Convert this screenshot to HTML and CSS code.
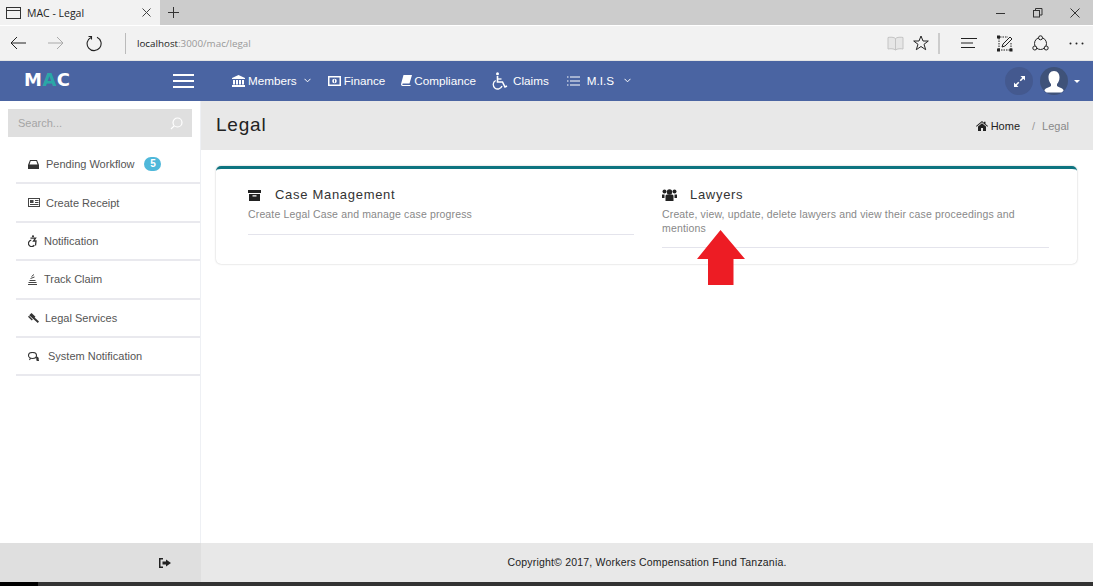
FILE: index.html
```html
<!DOCTYPE html>
<html lang="en">
<head>
    <meta charset="UTF-8">
    <title>MAC - Legal</title>
    <link rel="stylesheet" href="styles.css">
</head>
<body>

<div class="tabstrip">
    <div class="tab">
        <svg class="tab-icon" width="16" height="14" viewBox="0 0 16 14" fill="none" stroke="#333"><rect x="0.5" y="1.5" width="14" height="11"/><path d="M1 4.5h13"/></svg>
        <span class="tab-title">MAC - Legal</span>
        <svg width="9" height="9" viewBox="0 0 9 9" stroke="#444" fill="none"><path d="M0.500 0.500l8 8M8.500 0.500l-8 8"/></svg>
    </div>
    <svg class="new-tab" width="11" height="11" viewBox="0 0 11 11" stroke="#333" fill="none"><path d="M5.500 0v11M0 5.500h11"/></svg>
    <div class="win-buttons">
        <svg width="10" height="10" viewBox="0 0 10 10" stroke="#333" fill="none"><path d="M0 5.500h9"/></svg>
        <svg width="10" height="10" viewBox="0 0 10 10" stroke="#333" fill="none"><rect x="0.5" y="2.5" width="6" height="6.5"/><path d="M2.5 2.5v-2h6.5v6.500h-2"/></svg>
        <svg width="10" height="10" viewBox="0 0 10 10" stroke="#333" fill="none"><path d="M0.500 0.500l9 9M9.500 0.500l-9 9"/></svg>
    </div>
</div>

<div class="toolbar">
    <svg class="tool-back" width="17" height="14" viewBox="0 0 17 14" stroke="#222" fill="none"><path d="M16 7H1M7 1L1 7l6 6"/></svg>
    <svg class="tool-forward" width="17" height="14" viewBox="0 0 17 14" stroke="#aaa" fill="none"><path d="M0 7h15M9 1l6 6-6 6"/></svg>
    <svg class="tool-reload" width="17" height="17" viewBox="0 0 17 17" stroke="#222" fill="none" stroke-width="1.100"><path d="M5 2.400A7 7 0 1 0 11 2.300"/><path d="M2.500 1.500H5.500V4.500"/></svg>
    <div class="address"><b>localhost</b>:3000/mac/legal</div>
    <svg class="tool-book" width="17" height="15" viewBox="0 0 17 15" stroke="#c4c4c4" fill="#e6e6e6"><path d="M8.500 2.500C7 1 3 1 1 1.500V13c2-.5 6-.5 7.500 1 1.500-1.500 5.500-1.500 7.500-1V1.500C14 1 10 1 8.500 2.500zM8.500 2.500V14"/></svg>
    <svg class="tool-star" width="16" height="16" viewBox="0 0 16 16" stroke="#222" fill="none"><path d="M8 1l2 5h5.300l-4.300 3.300 1.700 5.400L8 11.500l-4.700 3.200L5 9.300.700 6H6z"/></svg>
    <div class="tool-sep"></div>
    <svg class="tool-hub" width="17" height="12" viewBox="0 0 17 12" stroke="#222" fill="none"><path d="M0 1.500h16M0 6h12M0 10.500h14"/></svg>
    <svg class="tool-note" width="16" height="17" viewBox="0 0 16 17" stroke="#222" fill="none"><path d="M3 2h8M14 8v6M2 3v11M4 15h9" stroke-dasharray="1.500 1"/><path d="M5 12l1-3 7-7 2 2-7 7z"/><rect x="0.500" y="1" width="2" height="2" fill="#222"/><rect x="0.500" y="14" width="2" height="2" fill="#222"/><rect x="13" y="14" width="2" height="2" fill="#222"/></svg>
    <svg class="tool-share" width="17" height="17" viewBox="0 0 17 17" stroke="#222" fill="none"><circle cx="8.500" cy="8.500" r="6"/><circle cx="8.500" cy="2.800" r="2" fill="#f2f2f2"/><circle cx="2.800" cy="13" r="2" fill="#f2f2f2"/><circle cx="14.200" cy="13" r="2" fill="#f2f2f2"/></svg>
    <svg class="tool-more" width="15" height="3" viewBox="0 0 15 3" fill="#222"><circle cx="1.500" cy="1.500" r="1"/><circle cx="7.500" cy="1.500" r="1"/><circle cx="13.500" cy="1.500" r="1"/></svg>
</div>

<header class="navbar">
    <div class="brand">M<span class="brand-a">A</span>C</div>
    <div class="hamburger"><span></span><span></span><span></span></div>
    <nav class="nav-links">
        <a class="nav-link">
            <svg width="13" height="12" viewBox="0 0 13 12" fill="#fff"><path d="M6.500 0L13 3v1H0V3zM1 5h2v4.500H1zM4 5h2v4.500H4zM7 5h2v4.500H7zM10 5h2v4.500h-2zM0 10h13v2H0z"/></svg>
            Members
            <svg class="caret" width="7" height="5" viewBox="0 0 7 5" stroke="#fff" fill="none"><path d="M0.500 0.800l3 3 3-3"/></svg>
        </a>
        <a class="nav-link nav-finance">
            <svg width="13" height="10" viewBox="0 0 13 10"><rect width="13" height="10" fill="#fff"/><rect x="1.500" y="1.500" width="10" height="7" fill="#4a64a2"/><circle cx="6.500" cy="5" r="2.300" fill="#fff"/><rect x="6" y="3.500" width="1" height="3" fill="#4a64a2"/></svg>
            Finance
        </a>
        <a class="nav-link nav-compliance">
            <svg width="11" height="11" viewBox="0 0 11 11" fill="#fff"><path d="M2.500 0H11L8.500 8.500H2C1 8.500 1 10 2 10h7.500v1H1.500C0 11-.2 9.500.3 8z"/></svg>
            Compliance
        </a>
        <a class="nav-link nav-claims">
            <svg width="16" height="18" viewBox="0 0 16 18" fill="none" stroke="#fff"><circle cx="5.500" cy="1.800" r="1.500" fill="#fff" stroke="none"/><path d="M5.500 4v6h5l2.500 5 2-1" stroke-width="1.600"/><path d="M5.500 7h4" stroke-width="1.300"/><path d="M3.700 8.500a4.500 4.500 0 1 0 6.300 5.500" stroke-width="1.300"/></svg>
            Claims
        </a>
        <a class="nav-link nav-mis">
            <svg width="13" height="10" viewBox="0 0 13 10" stroke="#fff" fill="none"><path d="M3 1h10M3 5h10M3 9h10M0 1h1.500M0 5h1.500M0 9h1.500"/></svg>
            M.I.S
            <svg class="caret" width="7" height="5" viewBox="0 0 7 5" stroke="#fff" fill="none"><path d="M0.500 0.800l3 3 3-3"/></svg>
        </a>
    </nav>
    <div class="nav-right">
        <div class="round-btn">
            <svg width="11" height="11" viewBox="0 0 11 11" fill="#fff"><path d="M11 0v4.500L9.300 2.800 6.800 5.300 5.700 4.200l2.500-2.500L6.500 0zM0 11V6.500l1.700 1.700 2.500-2.500 1.100 1.100-2.500 2.500L4.500 11z"/></svg>
        </div>
        <div class="avatar">
            <svg width="28" height="28" viewBox="0 0 28 28" fill="#fff"><path d="M14 4c4 0 5.500 3 5.500 6.500 0 3-1.500 5.500-2.500 6.500v2c2 1.500 5 1.500 6.500 4 .4.700-1 2-2 2.500H6.500c-1-.5-2.400-1.800-2-2.500 1.500-2.500 4.500-2.500 6.500-4v-2c-1-1-2.500-3.500-2.500-6.500C8.500 7 10 4 14 4z"/></svg>
        </div>
        <span class="avatar-caret"></span>
    </div>
</header>

<div class="main">
    <aside class="sidebar">
        <div class="search">
            <span>Search...</span>
            <svg width="13" height="13" viewBox="0 0 13 13" stroke="#fff" fill="none" stroke-width="1.200"><circle cx="7.500" cy="5.500" r="4.500"/><path d="M4.200 8.800L1 12"/></svg>
        </div>
        <ul class="side-menu">
            <li class="side-item">
                <svg class="ic-workflow" width="11" height="9" viewBox="0 0 11 9" fill="#333"><path d="M2 0h7l2 5v4H0V5zM2.700 1L1.500 4.500h8L8.300 1z" fill-rule="evenodd"/></svg>
                <span>Pending Workflow</span>
                <span class="badge">5</span>
            </li>
            <li class="side-item">
                <svg class="ic-receipt" width="12" height="9" viewBox="0 0 12 9" fill="none" stroke="#444"><rect x="0.500" y="0.500" width="11" height="8"/><rect x="2" y="2" width="3.500" height="3" fill="#444" stroke="none"/><path d="M7 2.500h3.500M7 4.500h3.500M2 6.500h8.500"/></svg>
                <span>Create Receipt</span>
            </li>
            <li class="side-item">
                <svg class="ic-notify" width="9" height="12" viewBox="0 0 9 12" fill="none" stroke="#333" stroke-width="1.300"><circle cx="5" cy="1.300" r="1.100" fill="#333" stroke="none"/><path d="M2.500 3.200h5L5.500 6H8l-.5 4.500"/><path d="M3.300 5.200a3.200 3.200 0 1 0 3 5"/></svg>
                <span>Notification</span>
            </li>
            <li class="side-item">
                <svg class="ic-track" width="9" height="11" viewBox="0 0 9 11" fill="none" stroke="#444"><path d="M0 10.500h9M0.500 8.500h8M1.500 6.500h6M2.500 4.500l4-1.500M3.500 2.500l2.500-2"/></svg>
                <span>Track Claim</span>
            </li>
            <li class="side-item">
                <svg class="ic-legal" width="11" height="10" viewBox="0 0 11 10" fill="#333"><path d="M3.500 0l4 3.800-2.200 2.300L1.200 2.300zM5.800 3.800L11 8.500 9.800 10 4.500 5.200z"/><path d="M0 3.800l1-1 3.800 3.800-1 1z"/></svg>
                <span>Legal Services</span>
            </li>
            <li class="side-item">
                <svg class="ic-system" width="11" height="9" viewBox="0 0 11 9" fill="none" stroke="#333" stroke-width="1.100"><ellipse cx="4.500" cy="3.500" rx="4" ry="3"/><path d="M2.500 6L1.500 8M8 5c2 0 2.500 1.500 2 2.500l.5 1.300-2-.8" fill="#333"/></svg>
                <span>System Notification</span>
            </li>
        </ul>
    </aside>

    <main class="content">
        <div class="page-title">
            <h1>Legal</h1>
            <div class="breadcrumb">
                <svg width="12" height="10" viewBox="0 0 12 10" fill="#222"><path d="M6 0l2 1.700V.800h1.500V3L12 5l-.6.700L6 1.300.600 5.700 0 5zM6 2.300l4 3.300V10H7V7H5v3H2V5.600z"/></svg>
                <span class="crumb-home">Home</span>
                <span class="crumb-sep">/</span>
                <span class="crumb-now">Legal</span>
            </div>
        </div>
        <section class="card">
            <div class="card-item">
                <h3>
                    <svg width="13" height="11" viewBox="0 0 13 11" fill="#222"><path d="M0 0h13v3H0zM1 4h11v7H1zM4.500 5.200v1.300h4V5.200z" fill-rule="evenodd"/></svg>
                    Case Management
                </h3>
                <p>Create Legal Case and manage case progress</p>
            </div>
            <div class="card-item">
                <h3 class="lawyers-head">
                    <svg width="15" height="12" viewBox="0 0 15 12" fill="#222"><circle cx="7.500" cy="3" r="2.700"/><circle cx="2.500" cy="2.500" r="2"/><circle cx="12.500" cy="2.500" r="2"/><path d="M3.500 7c0-1 1-1.500 2-1.500h4c1 0 2 .5 2 1.500v5h-8zM0 5.500h2.500V9H0zM12.500 5.500H15V9h-2.500z"/></svg>
                    Lawyers
                </h3>
                <p>Create, view, update, delete lawyers and view their case proceedings and mentions</p>
            </div>
        </section>
        <svg class="red-arrow" width="48" height="55" viewBox="0 0 48 55" fill="#ed1c24"><path d="M23.500 0L48 29H36.500V55H11V29H0z"/></svg>
        <div class="spacer"></div>
    </main>
</div>

<footer class="footer">
    <div class="footer-left">
        <svg width="12" height="10" viewBox="0 0 12 10" fill="#222"><path d="M4 0v1.500H1.500v7H4V10H0V0zM7 1.500L12 5 7 8.500V6.500H3.500v-3H7z"/></svg>
    </div>
    <div class="footer-right">Copyright© 2017, Workers Compensation Fund Tanzania.</div>
</footer>
<div class="taskbar"><div class="taskbar-start"></div></div>

</body>
</html>
```

FILE: styles.css
```css
html, body {
    height: 100%;
}
body {
    margin: 0;
    height: 586px;
    overflow: hidden;
    display: flex;
    flex-direction: column;
    font-family: "Liberation Sans", Arial, sans-serif;
    background: #fff;
    color: #333;
}
h1, h3, p, ul {
    margin: 0;
    padding: 0;
}
svg {
    flex: none;
    display: block;
}

/* browser chrome */
.tabstrip {
    height: 25px;
    background: #ccc;
    display: flex;
    align-items: center;
    flex: none;
}
.tab {
    width: 160px;
    height: 25px;
    box-sizing: border-box;
    padding: 0 9px 0 6px;
    background: #f2f2f2;
    display: flex;
    align-items: center;
    font-family: "Open Sans", sans-serif;
    font-size: 10.5px;
    color: #222;
}
.tab-icon {
    margin-right: 5px;
}
.tab-title {
    flex: 1;
}
.new-tab {
    margin-left: 8px;
}
.win-buttons {
    margin-left: auto;
    padding-right: 13px;
    display: flex;
    gap: 27px;
}
.toolbar {
    height: 34px;
    margin-top: 1px;
    background: #f2f2f2;
    border-bottom: 1px solid #e4e4e4;
    display: flex;
    align-items: center;
    flex: none;
    padding-left: 10px;
}
.tool-forward {
    margin-left: 21px;
}
.tool-reload {
    margin-left: 21px;
}
.address {
    margin-left: 22px;
    height: 21px;
    line-height: 21px;
    padding-left: 11px;
    border-left: 1px solid #bbb;
    width: 750px;
    font-family: "Open Sans", sans-serif;
    font-size: 9.8px;
    color: #999;
}
.address b {
    font-weight: 400;
    color: #222;
}
.tool-star {
    margin-left: 9px;
}
.tool-sep {
    width: 2px;
    height: 21px;
    background: #ccc;
    margin-left: 9px;
}
.tool-hub {
    margin-left: 21px;
}
.tool-note {
    margin-left: 19px;
}
.tool-share {
    margin-left: 19px;
}
.tool-more {
    margin-left: 20px;
}

/* app header */
.navbar {
    height: 40px;
    background: #4a64a2;
    display: flex;
    align-items: center;
    flex: none;
    color: #fff;
}
.brand {
    width: 173px;
    box-sizing: border-box;
    padding: 0 0 4px 24px;
    font-family: "DejaVu Sans", sans-serif;
    font-weight: 700;
    font-size: 18px;
    letter-spacing: 0.5px;
}
.brand-a {
    color: #2aa7a7;
}
.hamburger {
    width: 21px;
    display: flex;
    flex-direction: column;
    gap: 4px;
}
.hamburger span {
    height: 2px;
    background: #fff;
}
.nav-links {
    display: flex;
    align-items: center;
    margin-left: 38px;
    padding-bottom: 1px;
    font-size: 11.7px;
}
.nav-link {
    display: flex;
    align-items: center;
    gap: 3px;
    margin-right: 17px;
}
.nav-finance {
    margin-right: 16px;
}
.nav-compliance {
    gap: 2px;
    margin-right: 16px;
}
.nav-claims {
    gap: 5px;
    margin-right: 18px;
}
.nav-mis {
    gap: 7px;
}
.nav-mis .caret {
    margin-left: 3px;
}
.caret {
    margin-left: 4px;
}
.nav-right {
    margin-left: auto;
    display: flex;
    align-items: center;
    padding-right: 13px;
}
.round-btn, .avatar {
    width: 28px;
    height: 28px;
    border-radius: 50%;
    display: flex;
    align-items: center;
    justify-content: center;
    overflow: hidden;
}
.round-btn {
    background: #44598f;
}
.avatar {
    margin-left: 7px;
    background: #3f5279;
}
.avatar-caret {
    margin-left: 6px;
    border-top: 3px solid #fff;
    border-left: 3.500px solid transparent;
    border-right: 3.500px solid transparent;
}

/* main area */
.main {
    flex: 1;
    display: flex;
    min-height: 0;
}
.sidebar {
    width: 201px;
    box-sizing: border-box;
    border-right: 1px solid #eef0f4;
    padding-top: 8px;
    flex: none;
    font-size: 11px;
    color: #555;
}
.search {
    height: 28px;
    margin: 0 8px;
    background: #dfdfdf;
    display: flex;
    align-items: center;
    justify-content: space-between;
    padding: 0 9px 0 10px;
    color: #a5a5a5;
}
.side-menu {
    list-style: none;
    margin: 9px 0 0 16px;
}
.side-item {
    height: 36.4px;
    border-bottom: 2px solid #e9e9ee;
    padding-left: 12px;
    display: flex;
    align-items: center;
    gap: 6px;
}
.ic-workflow {
    margin-right: 1px;
}
.ic-notify, .ic-track {
    margin-right: 1px;
}
.ic-system {
    margin-right: 3px;
}
.badge {
    margin-left: 4px;
    width: 17px;
    height: 14px;
    line-height: 14px;
    border-radius: 7px;
    background: #4fb8da;
    color: #fff;
    font-size: 10px;
    font-weight: 700;
    text-align: center;
}
.content {
    flex: 1;
    min-width: 0;
    display: flex;
    flex-direction: column;
    position: relative;
}
.page-title {
    height: 49px;
    background: #e8e8e8;
    padding: 0 24px 0 15px;
    display: flex;
    align-items: center;
    justify-content: space-between;
}
.page-title h1 {
    font-weight: 400;
    font-size: 19px;
    letter-spacing: 0.8px;
    color: #222;
    margin-bottom: 2px;
}
.breadcrumb {
    display: flex;
    align-items: center;
    font-size: 11px;
}
.crumb-home {
    margin-left: 3px;
    color: #222;
}
.crumb-sep {
    margin-left: 12px;
    color: #999;
}
.crumb-now {
    margin-left: 7px;
    color: #888;
}
.card {
    margin: 16px 16px 0 15px;
    height: 98px;
    box-sizing: border-box;
    border-top: 3px solid #0e7480;
    border-radius: 5px;
    box-shadow: 0 0 2px rgba(0, 0, 0, 0.25);
    padding: 16px 0 0 32px;
    display: grid;
    grid-template-columns: 386px 387px;
    column-gap: 28px;
    align-items: start;
}
.card-item {
    border-bottom: 1px solid #e4e4ec;
    padding-bottom: 12px;
}
.card-item h3 {
    display: flex;
    align-items: center;
    gap: 14px;
    font-weight: 400;
    font-size: 13px;
    letter-spacing: 0.7px;
    color: #333;
    line-height: 20px;
}
.card-item .lawyers-head {
    gap: 13px;
}
.card-item p {
    margin-top: 3px;
    font-size: 10.5px;
    letter-spacing: 0.15px;
    line-height: 13.5px;
    color: #888;
}
.red-arrow {
    position: absolute;
    left: 496px;
    top: 129px;
}
.spacer {
    flex: 1;
}

/* footer */
.footer {
    height: 39px;
    display: flex;
    flex: none;
}
.footer-left {
    width: 201px;
    background: #dfdfdf;
    display: flex;
    align-items: center;
    padding-left: 159px;
    box-sizing: border-box;
}
.footer-right {
    flex: 1;
    background: #e8e8e8;
    text-align: center;
    line-height: 39px;
    font-size: 10.5px;
    letter-spacing: 0.2px;
    color: #222;
}
.taskbar {
    height: 4px;
    flex: none;
    background: #333;
}
.taskbar-start {
    width: 38px;
    height: 4px;
    background: #000;
}
```
